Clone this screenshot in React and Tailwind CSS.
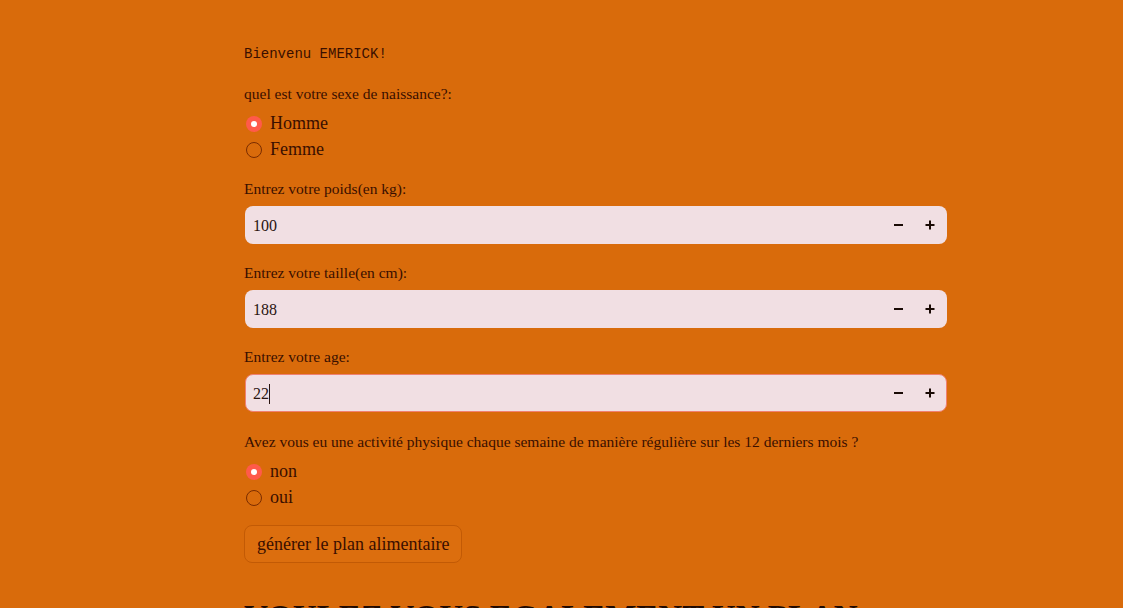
import React, { useState } from "react";

const serif = "font-['Liberation_Serif',serif]";

function Radio({ options, value, onChange }) {
  return (
    <div className="flex flex-col gap-[5px] mt-[9px]">
      {options.map((o) => (
        <label key={o} className="flex items-center gap-[8px] h-[21px] cursor-pointer" onClick={() => onChange(o)}>
          {value === o ? (
            <span className="w-[16px] h-[16px] ml-[2px] rounded-full bg-[#ff5a4a] flex items-center justify-center">
              <span className="w-[6px] h-[6px] rounded-full bg-white" />
            </span>
          ) : (
            <span className="w-[16px] h-[16px] ml-[2px] rounded-full border border-[#7a2c00]" />
          )}
          <span className="text-[18px] text-[#3a0f00]">{o}</span>
        </label>
      ))}
    </div>
  );
}

function NumberInput({ label, value, setValue, focused }) {
  return (
    <div className="mt-[19px]">
      <div className="text-[15.5px] leading-[20px] text-[#3a0f00]">{label}</div>
      <div
        className={`mt-[7px] ml-[1px] h-[38px] rounded-[8px] bg-[#f1dfe3] flex items-center border ${
          focused ? "border-[#f08070]" : "border-transparent"
        }`}
      >
        <span className="flex-1 pl-[7px] pt-[1px] text-[16px] text-[#2a1410] flex items-center">
          {value}
          {focused && <span className="inline-block w-[1px] h-[20px] bg-[#2a1410]" />}
        </span>
        <button onClick={() => setValue(value - 1)} className="w-[32px] h-full flex items-center justify-center">
          <span className="block w-[9px] h-[2px] bg-[#1a0a05]" />
        </button>
        <button onClick={() => setValue(value + 1)} className="w-[32px] h-full flex items-center justify-center">
          <svg width="10" height="10" viewBox="0 0 10 10">
            <path d="M5 0.5v9M0.5 5h9" stroke="#1a0a05" strokeWidth="2" />
          </svg>
        </button>
      </div>
    </div>
  );
}

export default function App() {
  const [sexe, setSexe] = useState("Homme");
  const [poids, setPoids] = useState(100);
  const [taille, setTaille] = useState(188);
  const [age, setAge] = useState(22);
  const [sport, setSport] = useState("non");

  return (
    <div className={`h-[608px] overflow-hidden bg-[#d96b0b] ${serif}`}>
      <div className="w-[703px] ml-[244px] pt-[46px]">
        <div className="font-['Liberation_Mono',monospace] text-[14px] leading-[16px] text-[#3a0f00]">Bienvenu EMERICK!</div>

        <div className="mt-[22px] text-[15.5px] leading-[20px] text-[#3a0f00]">quel est votre sexe de naissance?:</div>
        <Radio options={["Homme", "Femme"]} value={sexe} onChange={setSexe} />

        <NumberInput label="Entrez votre poids(en kg):" value={poids} setValue={setPoids} />
        <NumberInput label="Entrez votre taille(en cm):" value={taille} setValue={setTaille} />
        <NumberInput label="Entrez votre age:" value={age} setValue={setAge} focused />

        <div className="mt-[20px] text-[15.5px] leading-[20px] text-[#3a0f00]">
          Avez vous eu une activité physique chaque semaine de manière régulière sur les 12 derniers mois ?
        </div>
        <Radio options={["non", "oui"]} value={sport} onChange={setSport} />

        <button className="mt-[17px] h-[38px] px-[12px] rounded-[8px] border border-[#c25a05] bg-[#dc6e0e] text-[18px] text-[#3a0f00]">
          générer le plan alimentaire
        </button>

        <h2 className="mt-[34px] text-[33px] leading-[40px] font-bold text-[#1f0a03] whitespace-nowrap">
          VOULEZ VOUS EGALEMENT UN PLAN
        </h2>
      </div>
    </div>
  );
}
